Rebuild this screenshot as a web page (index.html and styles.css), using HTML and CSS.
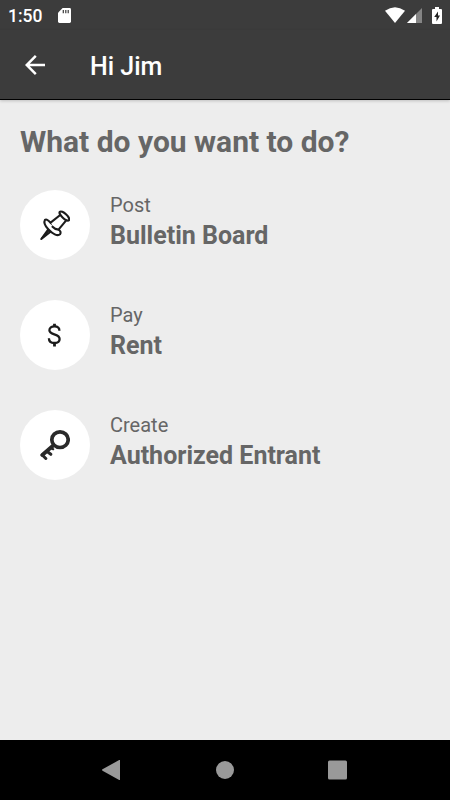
FILE: index.html
```
<!DOCTYPE html>
<html lang="en">
<head>
  <meta charset="UTF-8">
  <title>Hi Jim</title>
  <link rel="stylesheet" href="styles.css">
</head>
<body>
  <!-- Status bar -->
  <div class="status-bar">
    <span class="time">1:50</span>
    <svg class="sd-card" width="13" height="15" viewBox="0 0 14 16">
      <path fill="#fff" d="M5 0h7.500Q14 0 14 1.500v13Q14 16 12.500 16h-11Q0 16 0 14.500V5z"/>
      <path stroke="#3c3c3c" stroke-width="1.300" d="M5.700 2v3.500M8.400 2v3.500M11 2v3.500"/>
    </svg>
    <div class="status-icons">
      <svg width="20" height="16" viewBox="0 0 20 16">
        <path fill="#fff" d="M0 3.800Q10-3.200 20 3.800L10 16z"/>
      </svg>
      <svg width="15" height="15" viewBox="0 0 15 15">
        <path fill="#858585" d="M15 0v15H0z"/>
        <path fill="#fff" d="M9 6v9H0z"/>
      </svg>
      <svg class="battery" width="10" height="17" viewBox="0 0 10 17">
        <path fill="#fff" d="M3 0h4v2h2q1 0 1 1v13q0 1-1 1H1q-1 0-1-1V3q0-1 1-1h2z"/>
        <path fill="#222" d="M6 4.500L2.200 10h2.300v4.500L8 8.500H6z"/>
      </svg>
    </div>
  </div>

  <!-- App header -->
  <div class="header">
    <svg width="20" height="20" viewBox="0 0 20 20">
      <path fill="none" stroke="#fff" stroke-width="2.500" d="M20 10H2M10.800 .9L1.700 10l9.100 9.100"/>
    </svg>
    <div class="header-title">Hi Jim</div>
  </div>

  <!-- Menu -->
  <div class="content">
    <h1>What do you want to do?</h1>

    <div class="item">
      <div class="icon">
        <svg width="30" height="30" viewBox="0 0 30 30">
          <g fill="#fff" stroke="#1c1c1c" stroke-width="2.100" stroke-linejoin="round" stroke-linecap="round">
            <path d="M8.500 19L1.300 29l9.500-7.500z"/>
            <path stroke-width="1.500" d="M2 28l7.500-8"/>
            <path d="M5 9.800C3.500 12.500 5 16 8.500 19.500C12.500 23.800 17.500 26.500 20 24.300C21.200 22.800 20.600 21 18.600 19.500L10.500 12.600C8 9.800 6 9 5 9.800z"/>
            <path stroke="none" d="M10.600 12.600L20.600 4.800l5.400 6L18.300 19.800l-4-1z"/>
            <path fill="none" d="M10.600 12.600L20.500 4.800M25.800 10.800L18.500 19.600Q14.800 19.300 12.500 16.700"/>
            <ellipse cx="24.400" cy="6" rx="6.200" ry="2.300" transform="rotate(43 24.400 6)"/>
          </g>
        </svg>
      </div>
      <div class="item-text">
        <div class="label">Post</div>
        <div class="name">Bulletin Board</div>
      </div>
    </div>

    <div class="item">
      <div class="icon">
        <svg width="30" height="30" viewBox="0 0 30 30">
          <path fill="none" stroke="#1c1c1c" stroke-width="2.300" d="M19.400 10.700C19.400 7.700 17.400 6.300 14.500 6.300C11.500 6.300 9.400 8 9.400 10.300C9.400 15.600 19.600 13.200 19.600 19C19.600 21.600 17.500 23 14.500 23C11 23 8.900 21.200 8.900 18.200"/>
          <path stroke="#1c1c1c" stroke-width="2.800" d="M14.500 3.800v3M14.500 22.500v4"/>
        </svg>
      </div>
      <div class="item-text">
        <div class="label">Pay</div>
        <div class="name">Rent</div>
      </div>
    </div>

    <div class="item">
      <div class="icon">
        <svg width="30" height="30" viewBox="0 0 30 30">
          <g fill="none" stroke="#2a2a2a" stroke-linecap="round" stroke-linejoin="round">
            <ellipse cx="20" cy="9.700" rx="8.200" ry="7.800" stroke-width="3.700"/>
            <path stroke-width="3.800" d="M13.500 15.300L2.300 25"/>
            <path stroke-width="3" d="M2.300 25l3.500 3.500M6.800 21.300l4 3"/>
            <path stroke-width="2.200" d="M10.500 18l2.700 1.200"/>
          </g>
        </svg>
      </div>
      <div class="item-text">
        <div class="label">Create</div>
        <div class="name">Authorized Entrant</div>
      </div>
    </div>
  </div>

  <!-- Navigation bar -->
  <div class="nav-bar">
    <svg width="20" height="20" viewBox="0 0 20 20">
      <path fill="#999" d="M18 0v20q0 .4-.8 0L.5 10.700q-1-.7 0-1.400L17.200 0q.8-.4.8 0z"/>
    </svg>
    <svg width="20" height="20" viewBox="0 0 20 20">
      <circle cx="10" cy="10" r="9" fill="#999"/>
    </svg>
    <svg width="20" height="20" viewBox="0 0 20 20">
      <rect x="0" y=".5" width="19" height="19" rx="1.500" fill="#999"/>
    </svg>
  </div>
</body>
</html>
```

FILE: styles.css
```
/* Base styles */
body {
  font-family: Roboto, sans-serif;
  margin: 0;
  height: 100vh;
  display: flex;
  flex-direction: column;
  overflow: hidden;
  background-color: #ededed;
  color: #666;
}

svg {
  display: block;
  flex: none;
}

/* Status bar */
.status-bar {
  height: 30px;
  box-sizing: border-box;
  padding: 0 8px;
  display: flex;
  align-items: center;
  background-color: #3c3c3c;
  color: #fff;
}

.time {
  width: 50px;
  font-size: 17.5px;
  font-weight: 500;
  line-height: 30px;
  padding-top: 1px;
}

.status-icons {
  display: flex;
  align-items: center;
  gap: 2px;
  margin-left: auto;
}

.battery {
  margin-left: 8px;
}

/* App header */
.header {
  height: 69px;
  padding-left: 25px;
  display: flex;
  align-items: center;
  background-color: #3c3c3c;
  border-bottom: 1px solid #000;
  box-shadow: 0 1px 3px rgba(0, 0, 0, 0.2);
  color: #fff;
}

.header-title {
  margin-left: 45px;
  padding-top: 4px;
  font-size: 25px;
  font-weight: 500;
}

/* Content */
.content {
  flex: 1;
  padding: 22px 20px 0;
}

h1 {
  margin: 0 0 28px;
  font-size: 30px;
  line-height: 40px;
  font-weight: bold;
}

.item {
  display: flex;
  height: 70px;
  margin-bottom: 40px;
}

.icon {
  width: 70px;
  height: 70px;
  flex: none;
  display: flex;
  justify-content: center;
  align-items: center;
  border-radius: 50%;
  background-color: #fff;
}

.item-text {
  margin-left: 20px;
}

.label {
  font-size: 20px;
  line-height: 30px;
}

.name {
  font-size: 25px;
  line-height: 32px;
  font-weight: bold;
}

/* Navigation bar */
.nav-bar {
  height: 60px;
  display: flex;
  justify-content: center;
  align-items: center;
  gap: 93px;
  background-color: #000;
}
```
